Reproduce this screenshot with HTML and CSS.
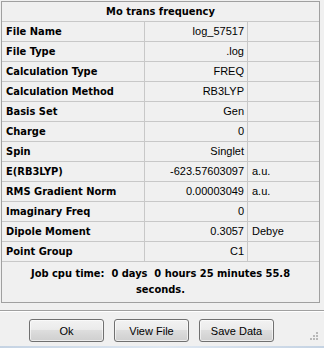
FILE: index.html
```html
<!DOCTYPE html>
<html>
<head>
<meta charset="utf-8">
<link rel="stylesheet" href="styles.css">
</head>
<body>
<div class="dialog">
  <div class="frame">
    <div class="title">Mo trans frequency</div>
    <div class="row"><div class="lbl">File Name</div><div class="val">log_57517</div><div class="unit"></div></div>
    <div class="row"><div class="lbl">File Type</div><div class="val">.log</div><div class="unit"></div></div>
    <div class="row"><div class="lbl">Calculation Type</div><div class="val">FREQ</div><div class="unit"></div></div>
    <div class="row"><div class="lbl">Calculation Method</div><div class="val">RB3LYP</div><div class="unit"></div></div>
    <div class="row"><div class="lbl">Basis Set</div><div class="val">Gen</div><div class="unit"></div></div>
    <div class="row"><div class="lbl">Charge</div><div class="val">0</div><div class="unit"></div></div>
    <div class="row"><div class="lbl">Spin</div><div class="val">Singlet</div><div class="unit"></div></div>
    <div class="row"><div class="lbl">E(RB3LYP)</div><div class="val">-623.57603097</div><div class="unit">a.u.</div></div>
    <div class="row"><div class="lbl">RMS Gradient Norm</div><div class="val">0.00003049</div><div class="unit">a.u.</div></div>
    <div class="row"><div class="lbl">Imaginary Freq</div><div class="val">0</div><div class="unit"></div></div>
    <div class="row"><div class="lbl">Dipole Moment</div><div class="val">0.3057</div><div class="unit">Debye</div></div>
    <div class="row"><div class="lbl">Point Group</div><div class="val">C1</div><div class="unit"></div></div>
    <div class="footer">Job cpu time:&nbsp; 0 days&nbsp; 0 hours 25 minutes 55.8<br>seconds.</div>
  </div>
  <div class="sep"></div>
  <div class="buttons">
    <button class="btn">Ok</button>
    <button class="btn">View File</button>
    <button class="btn">Save Data</button>
  </div>
  <svg class="grip" width="9" height="9" viewBox="0 0 9 9">
    <rect x="7" y="1" width="2" height="2" fill="#b8b8b8"/>
    <rect x="4" y="4" width="2" height="2" fill="#b8b8b8"/>
    <rect x="7" y="4" width="2" height="2" fill="#b8b8b8"/>
    <rect x="1" y="7" width="2" height="2" fill="#b8b8b8"/>
    <rect x="4" y="7" width="2" height="2" fill="#b8b8b8"/>
    <rect x="7" y="7" width="2" height="2" fill="#b8b8b8"/>
  </svg>
  <div class="edge"></div>
</div>
</body>
</html>
```

FILE: styles.css
```css
* { box-sizing: border-box; }
html, body {
  margin: 0;
  padding: 0;
  background: #f0f0f0;
}
body {
  width: 324px;
  height: 348px;
  overflow: hidden;
  font-family: "Liberation Sans", Arial, sans-serif;
  font-size: 11px;
  color: #000;
}
.dialog {
  position: relative;
  width: 324px;
  height: 348px;
  padding-top: 1px;
}
.frame {
  margin-left: 1px;
  width: 319px;
  border: 1px solid #a0a0a0;
}
.title {
  height: 20px;
  line-height: 20px;
  border-bottom: 1px solid #c8c8c8;
  text-align: center;
  font-family: "DejaVu Sans Condensed", "DejaVu Sans", sans-serif;
  font-weight: bold;
}
.row {
  display: flex;
  height: 20px;
  line-height: 19px;
  border-bottom: 1px solid #c8c8c8;
}
.lbl {
  width: 143px;
  padding-left: 4px;
  border-right: 1px solid #c8c8c8;
  font-family: "DejaVu Sans Condensed", "DejaVu Sans", sans-serif;
  font-weight: bold;
  white-space: nowrap;
}
.val {
  width: 103px;
  padding-right: 3px;
  text-align: right;
  border-right: 1px solid #c8c8c8;
  white-space: nowrap;
}
.unit {
  width: 71px;
  padding-left: 4px;
  white-space: nowrap;
}
.footer {
  height: 40px;
  padding-top: 4px;
  line-height: 16px;
  text-align: center;
  font-family: "DejaVu Sans Condensed", "DejaVu Sans", sans-serif;
  font-weight: bold;
}
.sep {
  margin-top: 7px;
  height: 2px;
  border-top: 1px solid #a0a0a0;
  border-bottom: 1px solid #ffffff;
}
.buttons {
  display: flex;
  gap: 10px;
  margin-top: 7px;
  padding-left: 29px;
}
.btn {
  width: 75px;
  height: 23px;
  margin: 0;
  padding: 0;
  border: 1px solid #707070;
  border-radius: 3px;
  background: linear-gradient(#f2f2f2 0%, #ebebeb 45%, #dddddd 50%, #cfcfcf 100%);
  box-shadow: inset 0 0 0 1px rgba(255,255,255,0.6);
  font-family: "Liberation Sans", Arial, sans-serif;
  font-size: 11px;
  color: #000;
}
.grip {
  position: absolute;
  left: 309px;
  top: 331px;
}
.edge {
  position: absolute;
  left: 0;
  bottom: 0;
  width: 324px;
  height: 2px;
  background: linear-gradient(90deg, #c5d3e3, #dfe8f2 50%, #c5d3e3);
}
```
